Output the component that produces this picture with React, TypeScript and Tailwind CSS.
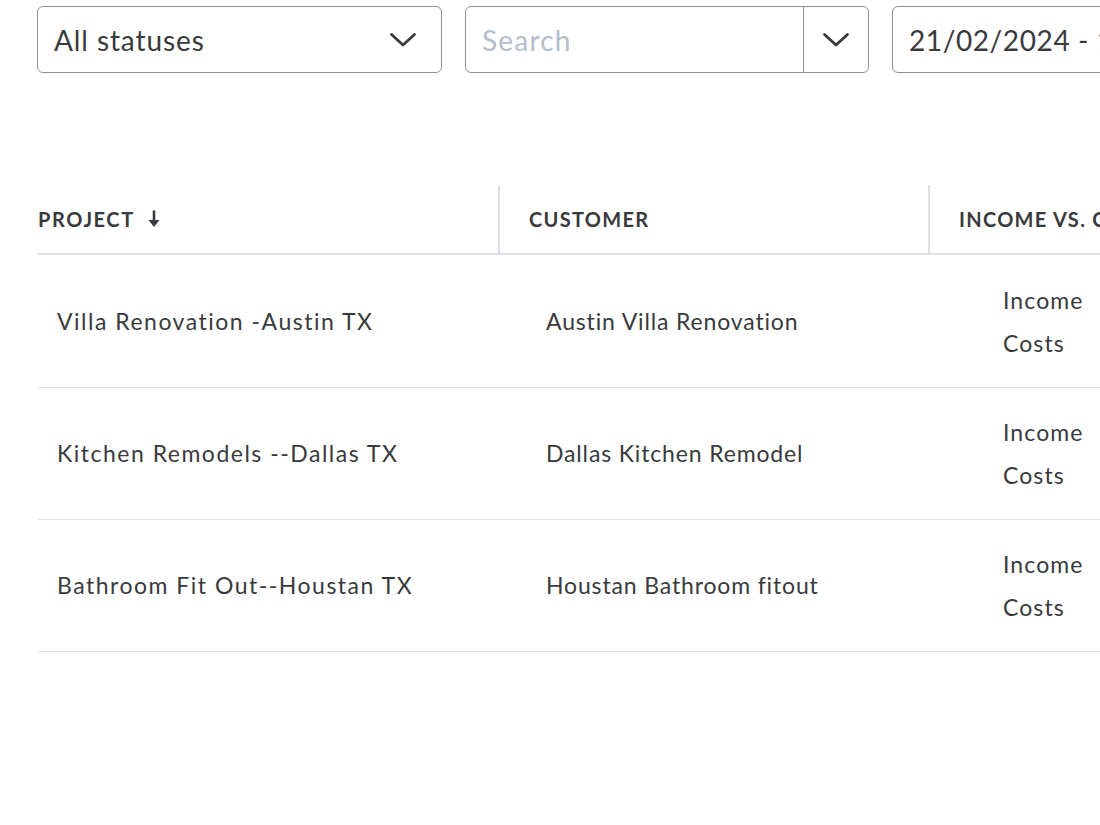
import React from "react";

const font = { fontFamily: '"Lato", "Noto Sans", sans-serif' };

function Chevron() {
  return (
    <svg width="28" height="16" viewBox="0 0 28 16" fill="none">
      <path d="M2.5 2.5 L14 13 L25.5 2.5" stroke="#393a3d" strokeWidth="2.8" strokeLinecap="round" strokeLinejoin="round" />
    </svg>
  );
}

const rows = [
  { project: "Villa Renovation -Austin TX", customer: "Austin Villa Renovation" },
  { project: "Kitchen Remodels --Dallas TX", customer: "Dallas Kitchen Remodel" },
  { project: "Bathroom Fit Out--Houstan TX", customer: "Houstan Bathroom fitout" },
];

export default function App() {
  return (
    <div className="w-[1100px] h-[825px] overflow-hidden bg-white text-[#393a3d]" style={font}>
      {/* filter bar */}
      <div className="flex gap-[23px] pl-[37px] pt-[6px] w-[1400px]">
        <div className="w-[405px] h-[67px] border border-[#8d9096] rounded-[6px] flex items-center justify-between pl-[16px] pr-[24px]">
          <span className="text-[28px] tracking-[0.9px]">All statuses</span>
          <Chevron />
        </div>
        <div className="w-[404px] h-[67px] border border-[#8d9096] rounded-[6px] flex items-center">
          <span className="flex-1 pl-[16px] text-[28px] tracking-[1.2px] text-[#b3bdcb]">Search</span>
          <div className="w-[65px] h-full border-l border-[#8d9096] flex items-center justify-center">
            <Chevron />
          </div>
        </div>
        <div className="w-[400px] h-[67px] border border-[#8d9096] rounded-[6px] flex items-center pl-[16px]">
          <span className="text-[28px] tracking-[0.6px]">21/02/2024 - 10/03/2024</span>
        </div>
      </div>

      {/* projects table */}
      <div className="mt-[112px] ml-[38px] w-[1300px]">
        <div className="flex h-[70px] border-b-2 border-[#dde1e6] text-[20px] font-bold tracking-[1.3px]">
          <div className="w-[460px] flex items-center gap-[12px]">
            <span className="tracking-[1.6px]">PROJECT</span>
            <svg width="14" height="18" viewBox="0 0 14 18" fill="none">
              <path d="M7 1.5 V14" stroke="#393a3d" strokeWidth="2.6" strokeLinecap="round" />
              <path d="M1.5 10 L7 17 L12.5 10 Z" fill="#393a3d" />
            </svg>
          </div>
          <div className="w-[430px] flex items-center pl-[29px] border-l-2 border-[#dde1e6]">
            CUSTOMER
          </div>
          <div className="flex-1 flex items-center pl-[29px] border-l-2 border-[#dde1e6]">
            INCOME VS. COSTS
          </div>
        </div>
        <div className="pt-[1px]">
          {rows.map((r) => (
            <div key={r.project} className="flex h-[132px] border-b border-[#dde1e6] text-[23px]">
              <div className="w-[460px] flex items-center pl-[19px] tracking-[1.5px]">{r.project}</div>
              <div className="w-[430px] flex items-center pl-[48px] tracking-[0.85px]">{r.customer}</div>
              <div className="flex-1 flex flex-col justify-center pl-[75px] pt-[1px] leading-[43px] tracking-[1.1px]">
                <span>Income</span>
                <span>Costs</span>
              </div>
            </div>
          ))}
        </div>
      </div>
    </div>
  );
}
